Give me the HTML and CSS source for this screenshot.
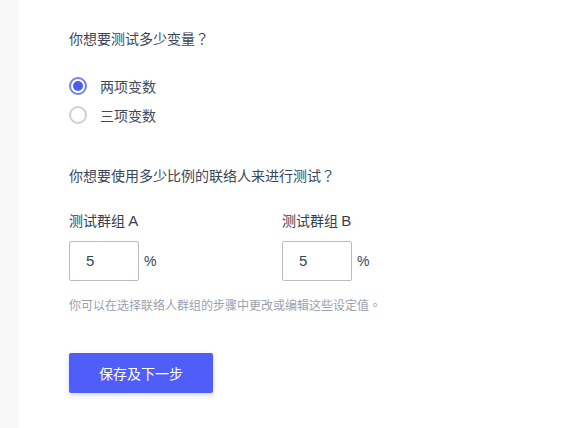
FILE: index.html
```html
<!DOCTYPE html>
<html lang="zh-CN">
<head>
<meta charset="utf-8">
<title>测试</title>
<link rel="stylesheet" href="styles.css">
</head>
<body>
<div class="page">
  <aside class="sidebar"></aside>
  <main class="main">
    <p class="question">你想要测试多少变量<span class="punct" lang="ja">？</span></p>
    <div class="radios">
      <label class="radio-row"><span class="radio checked"></span><span class="radio-label">两项变数</span></label>
      <label class="radio-row"><span class="radio"></span><span class="radio-label">三项变数</span></label>
    </div>
    <p class="question q2">你想要使用多少比例的联络人来进行测试<span class="punct" lang="ja">？</span></p>
    <div class="groups">
      <div class="group">
        <div class="group-label">测试群组 <span class="latin">A</span></div>
        <div class="field"><div class="input latin">5</div><span class="pct latin">%</span></div>
      </div>
      <div class="group">
        <div class="group-label">测试群组 <span class="latin">B</span></div>
        <div class="field"><div class="input latin">5</div><span class="pct latin">%</span></div>
      </div>
    </div>
    <p class="helper">你可以在选择联络人群组的步骤中更改或编辑这些设定值<span class="punct-tc" lang="zh-TW">。</span></p>
    <button class="btn">保存及下一步</button>
  </main>
</div>
</body>
</html>
```
FILE: styles.css
```css
* { box-sizing: border-box; }
html, body { margin: 0; padding: 0; background: #fff; }
body {
  font-family: "Noto Sans CJK SC", "Liberation Sans", sans-serif;
  color: #33475b;
  font-size: 14px;
}
.latin { font-family: "Liberation Sans", "Noto Sans CJK SC", sans-serif; }
.punct { font-family: "Noto Sans CJK JP", "Noto Sans CJK TC", sans-serif; }
.punct-tc { font-family: "Noto Sans CJK TC", "Noto Sans CJK JP", sans-serif; }
.page { display: flex; min-height: 428px; }
.sidebar { width: 19px; background: #f8f8f8; flex: none; }
.main { padding: 28px 0 0 50px; flex: 1; }
.question { margin: 0; line-height: 20px; font-size: 14px; color: #3b4656; }
.radios { margin-top: 23px; display: flex; flex-direction: column; }
.radio-row { display: flex; align-items: center; height: 29px; }
.radio {
  width: 18px; height: 18px; border-radius: 50%;
  border: 2px solid #cbd0d8; background: #fff; flex: none;
  display: flex; align-items: center; justify-content: center;
}
.radio.checked { border-color: #7183ea; }
.radio.checked::after {
  content: ""; width: 10px; height: 10px; border-radius: 50%; background: #4b5cf3;
}
.radio-label { margin-left: 13px; line-height: 20px; color: #3f4a5a; }
.q2 { margin-top: 36px; }
.groups { display: grid; grid-template-columns: 213px auto; margin-top: 25px; }
.group-label { line-height: 20px; font-weight: 400; color: #363e4c; }
.group-label .latin { font-size: 15px; }
.field { display: flex; align-items: center; margin-top: 10px; }
.input {
  width: 70px; height: 40px; border: 1px solid #b8bcc6; border-radius: 2px;
  padding-left: 16px; line-height: 38px; font-size: 15px; color: #33475b;
}
.pct { margin-left: 5px; font-size: 14px; color: #33475b; }
.helper { margin: 16px 0 0; font-size: 12px; line-height: 16px; color: #9aa1ad; }
.btn {
  margin-top: 40px; width: 144px; height: 40px; border: 0; border-radius: 2px;
  background: #4f5ef8; color: #fff; font-family: inherit; font-size: 14px;
  box-shadow: 0 2px 5px rgba(79, 94, 248, 0.25); display: block;
}
```
